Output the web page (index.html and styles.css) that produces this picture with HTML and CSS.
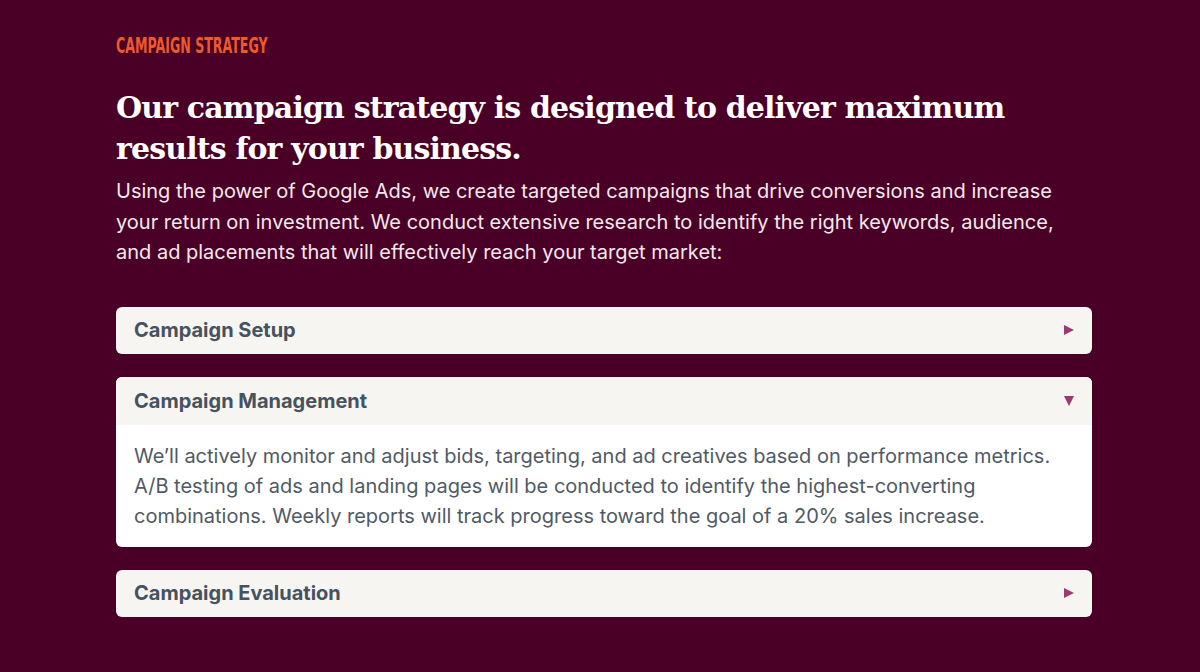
FILE: index.html
```html
<!DOCTYPE html>
<html lang="en">
<head>
<meta charset="utf-8">
<title>Campaign Strategy</title>
<link rel="stylesheet" href="styles.css">
</head>
<body>
<main class="section">
  <p class="eyebrow">CAMPAIGN STRATEGY</p>
  <h1 class="title">Our campaign strategy is designed to deliver maximum results for your business.</h1>
  <p class="intro">Using the power of Google Ads, we create targeted campaigns that drive conversions and increase your return on investment. We conduct extensive research to identify the right keywords, audience, and ad placements that will effectively reach your target market:</p>
  <div class="accordion">
    <div class="item">
      <div class="head"><span>Campaign Setup</span><span class="tri tri-right"></span></div>
    </div>
    <div class="item">
      <div class="head"><span>Campaign Management</span><span class="tri tri-down"></span></div>
      <div class="body">We’ll actively monitor and adjust bids, targeting, and ad creatives based on performance metrics. A/B testing of ads and landing pages will be conducted to identify the highest-converting combinations. Weekly reports will track progress toward the goal of a 20% sales increase.</div>
    </div>
    <div class="item">
      <div class="head"><span>Campaign Evaluation</span><span class="tri tri-right"></span></div>
    </div>
  </div>
</main>
</body>
</html>
```
FILE: styles.css
```css
html, body {
  margin: 0;
  padding: 0;
  background: #4a0026;
}
body {
  font-family: Inter, "Noto Sans", sans-serif;
}
.section {
  width: 976px;
  padding: 33px 0 0 116px;
}
.eyebrow {
  margin: 0;
  font-family: "DejaVu Sans Condensed", "DejaVu Sans", sans-serif;
  font-weight: 700;
  font-size: 21px;
  line-height: 26px;
  color: #ec5a2c;
  white-space: nowrap;
  transform: scaleX(0.667);
  transform-origin: left center;
}
.title {
  margin: 28px 0 0;
  font-family: "DejaVu Serif", "Liberation Serif", serif;
  font-weight: 700;
  font-size: 30px;
  line-height: 41px;
  color: #ffffff;
  letter-spacing: -0.85px;
}
.intro {
  margin: 7px 0 0;
  font-size: 20px;
  line-height: 30.5px;
  color: #f3e9ed;
}
.accordion {
  margin-top: 39px;
  display: flex;
  flex-direction: column;
  gap: 23px;
}
.item {
  border-radius: 6px;
  overflow: hidden;
  background: #ffffff;
}
.head {
  height: 47.5px;
  padding: 0 18px;
  background: #f7f5f2;
  display: flex;
  align-items: center;
  justify-content: space-between;
  font-weight: 700;
  font-size: 20px;
  color: #46525d;
}
.body {
  padding: 16px 18px 16px;
  font-size: 20px;
  line-height: 30px;
  color: #4f5a65;
}
.tri {
  display: block;
  width: 0;
  height: 0;
}
.tri-right {
  border-top: 5.5px solid transparent;
  border-bottom: 5.5px solid transparent;
  border-left: 10px solid #9c3a71;
}
.tri-down {
  border-left: 5.5px solid transparent;
  border-right: 5.5px solid transparent;
  border-top: 10px solid #9c3a71;
}
```
